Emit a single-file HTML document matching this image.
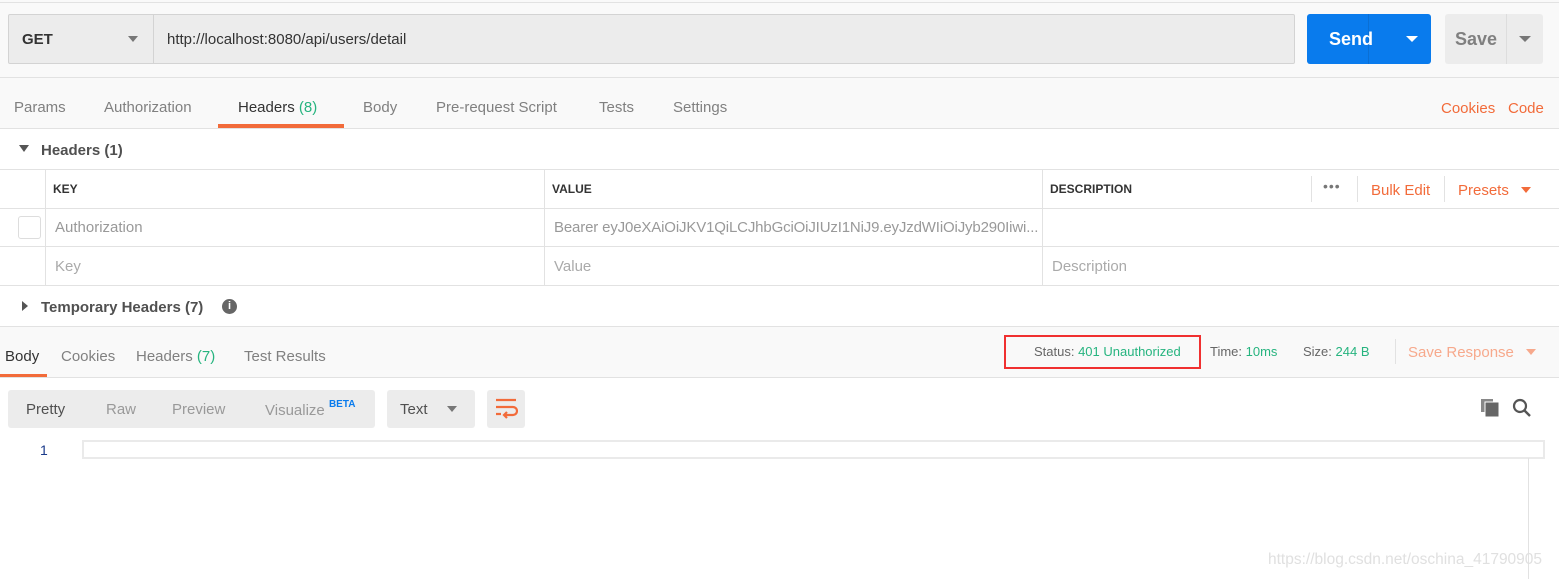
<!DOCTYPE html>
<html><head><style>
*{margin:0;padding:0;box-sizing:border-box}
body{width:1559px;height:579px;background:#fff;font-family:"Liberation Sans",sans-serif;position:relative;overflow:hidden;color:#505050}
.a{position:absolute;white-space:nowrap}
.t{font-size:15px;color:#808080}
.hl{position:absolute;left:0;width:1559px;height:1px;background:#e2e2e2}
.vl{position:absolute;width:1px;background:#e2e2e2}
.or{color:#f26b3a}
.gr{color:#26b47f}
</style></head><body>
<div class="a" style="left:0;top:0;width:1559px;height:128px;background:#f9f9f9"></div>
<div class="hl" style="top:2px"></div>
<div class="a" style="left:8px;top:14px;width:1287px;height:50px;background:#ececec;border:1px solid #d3d3d3;border-radius:2px"></div>
<div class="vl" style="left:153px;top:15px;height:48px;background:#d3d3d3"></div>
<div class="a" style="left:22px;top:31px;font-size:15px;color:#333;font-weight:bold">GET</div>
<div class="a" style="left:128px;top:36px;width:0;height:0;border-left:5px solid transparent;border-right:5px solid transparent;border-top:6px solid #777"></div>
<div class="a" style="left:167px;top:31px;font-size:15px;color:#333">http://localhost:8080/api/users/detail</div>
<div class="a" style="left:1307px;top:14px;width:124px;height:50px;background:#097bed;border-radius:3px"></div>
<div class="vl" style="left:1368px;top:14px;height:50px;background:#0a6fd4"></div>
<div class="a" style="left:1329px;top:29px;font-size:18px;color:#fff;font-weight:bold">Send</div>
<div class="a" style="left:1406px;top:36px;width:0;height:0;border-left:6px solid transparent;border-right:6px solid transparent;border-top:6px solid #fff"></div>
<div class="a" style="left:1445px;top:14px;width:98px;height:50px;background:#ececec;border-radius:3px"></div>
<div class="vl" style="left:1506px;top:14px;height:50px;background:#ddd"></div>
<div class="a" style="left:1455px;top:29px;font-size:18px;color:#808080;font-weight:bold">Save</div>
<div class="a" style="left:1519px;top:36px;width:0;height:0;border-left:6px solid transparent;border-right:6px solid transparent;border-top:6px solid #777"></div>
<div class="hl" style="top:77px"></div>
<div class="a t" style="left:14px;top:99px">Params</div>
<div class="a t" style="left:104px;top:99px">Authorization</div>
<div class="a t" style="left:238px;top:99px;color:#333">Headers <span class="gr">(8)</span></div>
<div class="a t" style="left:363px;top:99px">Body</div>
<div class="a t" style="left:436px;top:99px">Pre-request Script</div>
<div class="a t" style="left:599px;top:99px">Tests</div>
<div class="a t" style="left:673px;top:99px">Settings</div>
<div class="a" style="left:218px;top:124px;width:126px;height:4px;background:#f26b3a"></div>
<div class="a or" style="left:1441px;top:100px;font-size:15px">Cookies</div>
<div class="a or" style="left:1508px;top:100px;font-size:15px">Code</div>
<div class="hl" style="top:128px"></div>
<div class="a" style="left:19px;top:145px;width:0;height:0;border-left:5px solid transparent;border-right:5px solid transparent;border-top:7px solid #555"></div>
<div class="a" style="left:41px;top:142px;font-size:15px;color:#505050;font-weight:bold">Headers (1)</div>
<div class="hl" style="top:169px"></div>
<div class="hl" style="top:208px"></div>
<div class="hl" style="top:246px"></div>
<div class="hl" style="top:285px"></div>
<div class="vl" style="left:45px;top:169px;height:116px"></div>
<div class="vl" style="left:544px;top:169px;height:116px"></div>
<div class="vl" style="left:1042px;top:169px;height:116px"></div>
<div class="vl" style="left:1311px;top:176px;height:26px"></div>
<div class="vl" style="left:1357px;top:176px;height:26px"></div>
<div class="vl" style="left:1444px;top:176px;height:26px"></div>
<div class="a" style="left:53px;top:182px;font-size:12px;font-weight:bold;color:#333">KEY</div>
<div class="a" style="left:552px;top:182px;font-size:12px;font-weight:bold;color:#333">VALUE</div>
<div class="a" style="left:1050px;top:182px;font-size:12px;font-weight:bold;color:#333">DESCRIPTION</div>
<div class="a" style="left:1323px;top:178px;font-size:14px;color:#777;letter-spacing:1px">•••</div>
<div class="a or" style="left:1371px;top:182px;font-size:15px">Bulk Edit</div>
<div class="a or" style="left:1458px;top:182px;font-size:15px">Presets</div>
<div class="a" style="left:1521px;top:187px;width:0;height:0;border-left:5px solid transparent;border-right:5px solid transparent;border-top:6px solid #f26b3a"></div>
<div class="a" style="left:18px;top:216px;width:23px;height:23px;border:1px solid #ddd;border-radius:3px;background:#fff"></div>
<div class="a t" style="left:55px;top:219px;color:#999">Authorization</div>
<div class="a t" style="left:554px;top:219px;color:#999;letter-spacing:-0.15px">Bearer eyJ0eXAiOiJKV1QiLCJhbGciOiJIUzI1NiJ9.eyJzdWIiOiJyb290Iiwi...</div>
<div class="a t" style="left:55px;top:258px;color:#aaa">Key</div>
<div class="a t" style="left:554px;top:258px;color:#aaa">Value</div>
<div class="a t" style="left:1052px;top:258px;color:#aaa">Description</div>
<div class="a" style="left:22px;top:301px;width:0;height:0;border-top:5px solid transparent;border-bottom:5px solid transparent;border-left:6px solid #555"></div>
<div class="a" style="left:41px;top:299px;font-size:15px;font-weight:bold;color:#505050">Temporary Headers (7)</div>
<div class="a" style="left:222px;top:299px;width:15px;height:15px;border-radius:50%;background:#666;color:#fff;font-size:11px;font-weight:bold;text-align:center;line-height:15px">i</div>
<div class="a" style="left:0;top:326px;width:1559px;height:51px;background:#f9f9f9"></div>
<div class="hl" style="top:326px"></div>
<div class="hl" style="top:377px"></div>
<div class="a t" style="left:5px;top:348px;color:#333">Body</div>
<div class="a t" style="left:61px;top:348px">Cookies</div>
<div class="a t" style="left:136px;top:348px">Headers <span class="gr">(7)</span></div>
<div class="a t" style="left:244px;top:348px">Test Results</div>
<div class="a" style="left:0;top:374px;width:47px;height:3px;background:#f26b3a"></div>
<div class="a" style="left:1004px;top:335px;width:197px;height:34px;border:2px solid #f03030"></div>
<div class="a" style="left:1034px;top:344px;font-size:13px;color:#666">Status: <span class="gr">401 Unauthorized</span></div>
<div class="a" style="left:1210px;top:344px;font-size:13px;color:#666">Time: <span class="gr">10ms</span></div>
<div class="a" style="left:1303px;top:344px;font-size:13px;color:#666">Size: <span class="gr">244 B</span></div>
<div class="vl" style="left:1395px;top:339px;height:25px"></div>
<div class="a" style="left:1408px;top:344px;font-size:15px;color:#f7a98c">Save Response</div>
<div class="a" style="left:1526px;top:349px;width:0;height:0;border-left:5px solid transparent;border-right:5px solid transparent;border-top:6px solid #f7a98c"></div>
<div class="a" style="left:8px;top:390px;width:367px;height:38px;background:#ececec;border-radius:3px"></div>
<div class="a t" style="left:26px;top:401px;color:#505050">Pretty</div>
<div class="a t" style="left:106px;top:401px;color:#999">Raw</div>
<div class="a t" style="left:172px;top:401px;color:#999">Preview</div>
<div class="a t" style="left:265px;top:401px;color:#999">Visualize <sup style="font-size:10px;color:#097bed;font-weight:bold;position:relative;top:-2px">BETA</sup></div>
<div class="a" style="left:387px;top:390px;width:88px;height:38px;background:#ececec;border-radius:3px"></div>
<div class="a t" style="left:400px;top:401px;color:#505050">Text</div>
<div class="a" style="left:447px;top:406px;width:0;height:0;border-left:5px solid transparent;border-right:5px solid transparent;border-top:6px solid #777"></div>
<div class="a" style="left:487px;top:390px;width:38px;height:38px;background:#ececec;border-radius:3px"></div>
<svg class="a" style="left:494px;top:397px" width="24" height="24" viewBox="0 0 24 24"><g stroke="#f26b3a" stroke-width="2.2" fill="none"><path d="M2 3h20M2 10h17a4 4 0 0 1 0 8h-8M2 17h5"/><path d="M13 15l-3 3 3 3"/></g></svg>
<svg class="a" style="left:1480px;top:398px" width="20" height="20" viewBox="0 0 20 20"><rect x="1" y="1" width="12" height="13" fill="#888"/><rect x="5" y="4" width="14" height="15" fill="#666" stroke="#fff" stroke-width="1"/></svg>
<svg class="a" style="left:1512px;top:398px" width="20" height="20" viewBox="0 0 20 20"><circle cx="8" cy="8" r="6" stroke="#555" stroke-width="2.2" fill="none"/><path d="M12.5 12.5L18 18" stroke="#555" stroke-width="2.4"/></svg>
<div class="a" style="left:40px;top:442px;font-size:14px;color:#1a3a8a">1</div>
<div class="a" style="left:82px;top:440px;width:1463px;height:19px;border:2px solid #eaeaea"></div>
<div class="vl" style="left:1528px;top:458px;height:121px"></div>
<div class="a" style="left:1268px;top:551px;font-size:15.5px;color:#e0e0e0">https://blog.csdn.net/oschina_41790905</div>
</body></html>
